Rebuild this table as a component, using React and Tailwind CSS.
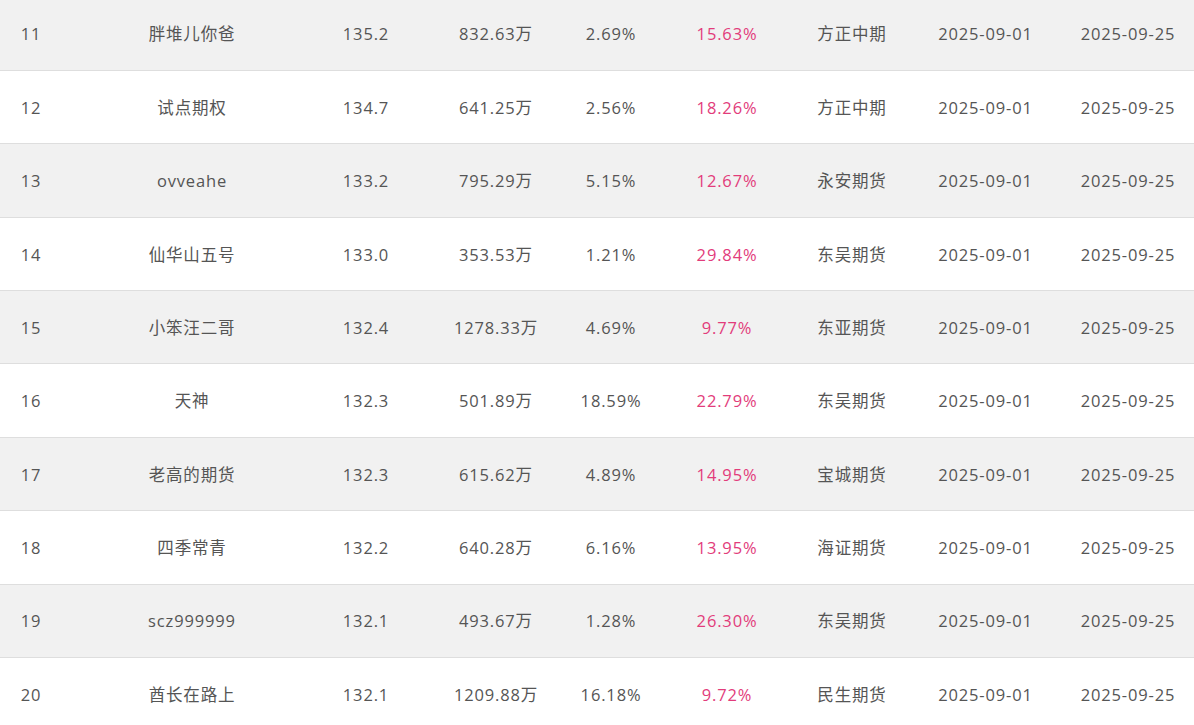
const rows = [
  ['11', '胖堆儿你爸', '135.2', '832.63万', '2.69%', '15.63%', '方正中期'],
  ['12', '试点期权', '134.7', '641.25万', '2.56%', '18.26%', '方正中期'],
  ['13', 'ovveahe', '133.2', '795.29万', '5.15%', '12.67%', '永安期货'],
  ['14', '仙华山五号', '133.0', '353.53万', '1.21%', '29.84%', '东吴期货'],
  ['15', '小笨汪二哥', '132.4', '1278.33万', '4.69%', '9.77%', '东亚期货'],
  ['16', '天神', '132.3', '501.89万', '18.59%', '22.79%', '东吴期货'],
  ['17', '老高的期货', '132.3', '615.62万', '4.89%', '14.95%', '宝城期货'],
  ['18', '四季常青', '132.2', '640.28万', '6.16%', '13.95%', '海证期货'],
  ['19', 'scz999999', '132.1', '493.67万', '1.28%', '26.30%', '东吴期货'],
  ['20', '酋长在路上', '132.1', '1209.88万', '16.18%', '9.72%', '民生期货'],
];

function Cell({ children, pink }) {
  return (
    <div className={`flex items-center justify-center whitespace-nowrap pt-[2px] ${pink ? 'text-[#e23c7b]' : ''}`}>
      {children}
    </div>
  );
}

export default function App() {
  return (
    <div
      className="w-[1194px] h-[725px] overflow-hidden bg-white text-[#555] text-[16.5px] tracking-[0.85px]"
      style={{ fontFamily: '"Open Sans", "Noto Sans CJK SC", sans-serif' }}
    >
      <div className="mt-[-2.4px]">
        {rows.map((r, i) => (
          <div
            key={r[0]}
            className={`grid grid-cols-[62px_260px_88px_172px_58px_174px_76px_191px_94px_1fr] h-[73.375px] border-b border-[#dedede] ${
              i % 2 === 0 ? 'bg-[#f1f1f1]' : 'bg-white'
            }`}
          >
            <Cell>{r[0]}</Cell>
            <Cell>{r[1]}</Cell>
            <Cell>{r[2]}</Cell>
            <Cell>{r[3]}</Cell>
            <Cell>{r[4]}</Cell>
            <Cell pink>{r[5]}</Cell>
            <Cell>{r[6]}</Cell>
            <Cell>2025-09-01</Cell>
            <Cell>2025-09-25</Cell>
            <div />
          </div>
        ))}
      </div>
    </div>
  );
}
